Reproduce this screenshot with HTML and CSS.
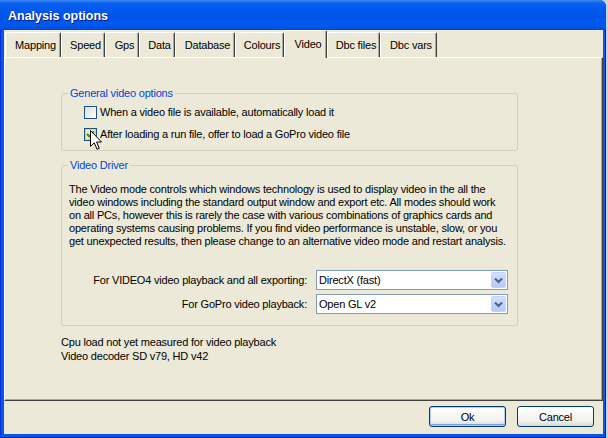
FILE: index.html
```html
<!DOCTYPE html>
<html>
<head>
<meta charset="utf-8">
<title>Analysis options</title>
<link rel="stylesheet" href="styles.css">
</head>
<body>
<div class="window">
  <div class="titlebar"><span class="title">Analysis options</span></div>
  <div class="client">
    <div class="tabs">
      <div class="tab w-mapping">Mapping</div>
      <div class="tab w-speed">Speed</div>
      <div class="tab w-gps">Gps</div>
      <div class="tab w-data">Data</div>
      <div class="tab w-database">Database</div>
      <div class="tab w-colours">Colours</div>
      <div class="tab active w-video">Video</div>
      <div class="tab w-dbcfiles">Dbc files</div>
      <div class="tab w-dbcvars">Dbc vars</div>
    </div>
    <div class="panel">
      <fieldset class="group group-general">
        <legend>General video options</legend>
        <div class="group-body checks">
          <div class="check"><span class="box"></span><span>When a video file is available, automatically load it</span></div>
          <div class="check"><span class="box hover"><svg width="11" height="11" viewBox="0 0 11 11"><path d="M2 5 L4.3 7.4 L9 2.6" fill="none" stroke="#21A121" stroke-width="2.2"/></svg></span><span>After loading a run file, offer to load a GoPro video file</span></div>
        </div>
      </fieldset>
      <fieldset class="group group-driver">
        <legend>Video Driver</legend>
        <div class="group-body driver">
          <p class="desc">The Video mode controls which windows technology is used to display video in the all the<br>video windows including the standard output window and export etc. All modes should work<br>on all PCs, however this is rarely the case with various combinations of graphics cards and<br>operating systems causing problems. If you find video performance is unstable, slow, or you<br>get unexpected results, then please change to an alternative video mode and restart analysis.</p>
          <div class="driver-rows">
            <span class="lbl">For VIDEO4 video playback and all exporting:</span>
            <div class="combo"><span class="val">DirectX (fast)</span><span class="drop"><svg width="13" height="14" viewBox="0 0 13 14"><path d="M3 5.5 L6.5 9 L10 5.5" fill="none" stroke="#4D6185" stroke-width="2"/></svg></span></div>
            <span class="lbl">For GoPro video playback:</span>
            <div class="combo"><span class="val">Open GL v2</span><span class="drop"><svg width="13" height="14" viewBox="0 0 13 14"><path d="M3 5.5 L6.5 9 L10 5.5" fill="none" stroke="#4D6185" stroke-width="2"/></svg></span></div>
          </div>
        </div>
      </fieldset>
      <div class="status">
        <div>Cpu load not yet measured for video playback</div>
        <div>Video decoder SD v79, HD v42</div>
      </div>
      <svg class="cursor" width="13" height="21" viewBox="0 0 13 21"><path d="M0.5 0.5 L0.5 16.5 L4.3 12.8 L7 19.3 L9.3 18.3 L6.6 12 L11.5 12 Z" fill="#fff" stroke="#000" stroke-width="1" stroke-linejoin="miter"/></svg>
    </div>
    <div class="footer">
      <button class="btn default">Ok</button>
      <button class="btn">Cancel</button>
    </div>
  </div>
</div>
</body>
</html>
```
FILE: styles.css
```css
* { box-sizing: border-box; }
html, body { margin: 0; padding: 0; }
body {
  width: 608px;
  height: 438px;
  overflow: hidden;
  background: #C9D3E6;
  font-family: "Liberation Sans", Arial, sans-serif;
  font-size: 11px;
  letter-spacing: -0.2px;
  color: #000;
}
.window {
  width: 606px;
  height: 438px;
  display: flex;
  flex-direction: column;
  background: #0A55E6;
  box-shadow: inset 1px 0 #0831D9, inset -1px 0 #001EA0, inset 0 -1px #001EA0;
  border-radius: 0 7px 0 0;
}
.titlebar {
  height: 30px;
  flex: none;
  display: flex;
  align-items: center;
  padding: 2px 0 0 8px;
  border-radius: 0 7px 0 0;
  background: linear-gradient(#3D8CF7 0, #0F62F0 3px, #0058EE 10px, #0055E8 55%, #0059EE 85%, #0048D8 100%);
}
.title {
  color: #fff;
  font-weight: bold;
  font-size: 12.5px;
  letter-spacing: 0;
  text-shadow: 1px 1px #0A1883;
}
.client {
  flex: 1;
  margin: 0 3px 4px 4px;
  background: #ECE9D8;
  display: flex;
  flex-direction: column;
}
.tabs {
  height: 27px;
  flex: none;
  display: flex;
  align-items: flex-end;
  padding-left: 1px;
}
.tab {
  height: 25px;
  display: flex;
  align-items: center;
  justify-content: center;
  padding-left: 5px;
  background: #ECE9D8;
  border-top: 1px solid #fff;
  border-left: 1px solid #fff;
  border-right: 1px solid #404040;
  box-shadow: inset -1px 0 #ACA899;
  border-radius: 2px 2px 0 0;
  white-space: nowrap;
}
.tab.active {
  height: 28px;
  margin-bottom: -1px;
  padding-top: 0;
  padding-bottom: 1px;
  position: relative;
  z-index: 1;
}
.w-mapping { width: 56px; }
.w-speed { width: 44px; }
.w-gps { width: 34px; }
.w-data { width: 36px; }
.w-database { width: 60px; }
.w-colours { width: 49px; }
.w-video { width: 43px; }
.w-dbcfiles { width: 53px; }
.w-dbcvars { width: 57px; }
.panel {
  position: relative;
  height: 344px;
  flex: none;
  border-top: 1px solid #fff;
  border-left: 1px solid #fff;
  border-right: 1px solid #404040;
  border-bottom: 1px solid #404040;
  box-shadow: inset -1px -1px #ACA899;
  padding: 29px 0 0 56px;
}
.group {
  margin: 0;
  padding: 0;
  width: 457px;
  min-inline-size: 0;
  border: 1px solid #D0D0BF;
  border-radius: 3px;
}
.group legend {
  margin-left: 6px;
  padding: 0 2px;
  color: #0046D5;
  line-height: 13px;
}
.group-driver { margin-top: 8px; }
.checks {
  display: flex;
  flex-direction: column;
  gap: 9px;
  padding: 6px 0 9px 22px;
}
.check {
  display: flex;
  align-items: center;
  gap: 3px;
  height: 13px;
  line-height: 13px;
  white-space: nowrap;
}
.box {
  width: 13px;
  height: 13px;
  flex: none;
  border: 1px solid #1C5180;
  background: linear-gradient(135deg, #DCDCD7, #FFFFFF);
  display: flex;
}
.box.hover {
  box-shadow: inset 0 0 0 1px #FBC66A, inset 0 0 0 2px #F8E3B3;
}
.driver {
  padding: 11px 0 11px 7px;
}
.desc {
  margin: 0 0 22px 0;
  line-height: 13px;
  white-space: nowrap;
}
.driver-rows {
  display: grid;
  grid-template-columns: 238px 192px;
  column-gap: 9px;
  row-gap: 4px;
  align-items: center;
}
.lbl {
  text-align: right;
  white-space: nowrap;
}
.combo {
  height: 20px;
  border: 1px solid #7F9DB9;
  background: #fff;
  display: flex;
  align-items: center;
  padding-left: 2px;
}
.val { flex: 1; }
.drop {
  width: 15px;
  height: 16px;
  margin-right: 1px;
  border: 1px solid #C3D3F9;
  border-radius: 2px;
  background: linear-gradient(#D2DFFD, #B6CAF8);
  display: flex;
  align-items: center;
  justify-content: center;
}
.status {
  margin-top: 9px;
  margin-left: 0;
  line-height: 14px;
}
.cursor {
  position: absolute;
  left: 85px;
  top: 72px;
}
.footer {
  flex: 1;
  display: flex;
  justify-content: flex-end;
  align-items: flex-start;
  gap: 11px;
  padding: 5px 9px 0 0;
}
.btn {
  width: 77px;
  height: 21px;
  font-family: "Liberation Sans", Arial, sans-serif;
  font-size: 11px;
  letter-spacing: -0.2px;
  color: #000;
  border: 1px solid #003C74;
  border-radius: 3px;
  background: linear-gradient(#FFFFFF, #F3F3EF 70%, #DCD8CE);
  padding: 0;
}
.btn.default {
  box-shadow: inset 0 0 0 1px #B2CCF4, inset 0 -1px 0 1px #7F9EE8;
}
```
